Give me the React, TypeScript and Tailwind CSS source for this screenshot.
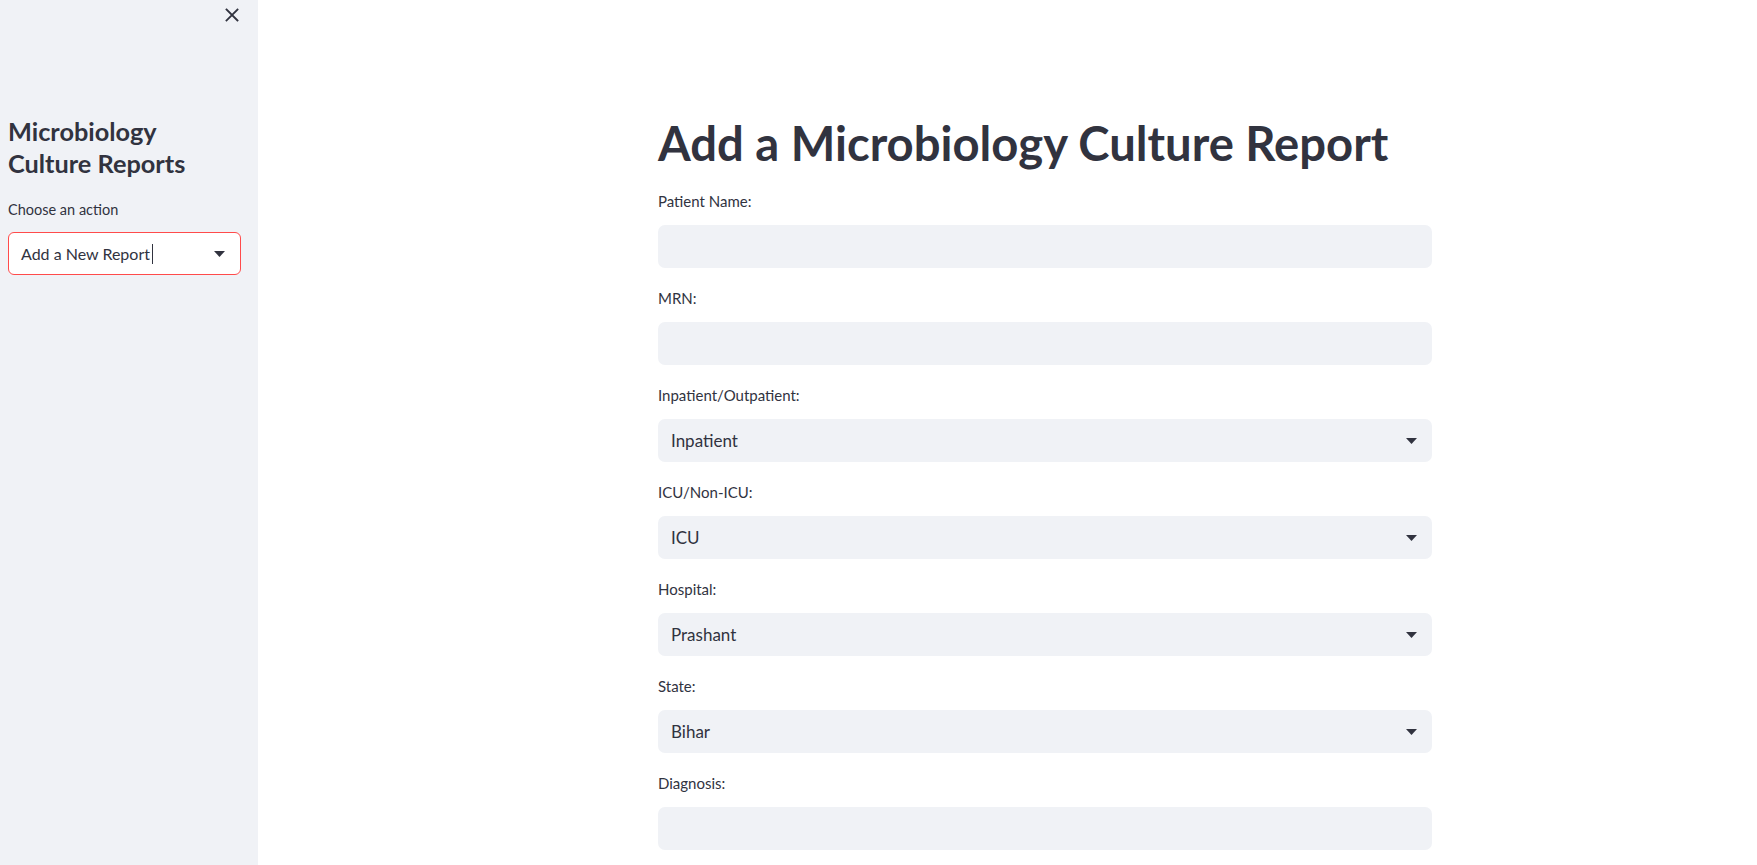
import React from "react";

const FONT = { fontFamily: "Lato, 'Noto Sans', sans-serif" };

function Caret() {
  return (
    <svg width="11" height="6" viewBox="0 0 11 6" className="shrink-0">
      <polygon points="0,0 11,0 5.5,6" fill="#31333F" />
    </svg>
  );
}

function Field({ label, value, select }: { label: string; value?: string; select?: boolean }) {
  return (
    <div className="flex flex-col">
      <div className="h-[22px] text-[15px] leading-[22px] text-[#31333F]">{label}</div>
      <div className="mt-[13px] flex h-[43px] items-center justify-between rounded-[7px] bg-[#f0f2f6] pl-[13px] pr-[15px]">
        <span className="text-[17px] text-[#31333F]">{value ?? ""}</span>
        {select ? <Caret /> : null}
      </div>
    </div>
  );
}

export default function App() {
  return (
    <div className="flex h-[865px] w-full overflow-hidden bg-white" style={FONT}>
      <aside className="flex w-[258px] shrink-0 flex-col bg-[#f0f2f6] px-[8px]">
        <div className="flex h-[22px] items-end justify-end pr-[11px]">
          <svg width="14" height="14" viewBox="0 0 14 14">
            <path d="M1.5 1.5 L12.5 12.5 M12.5 1.5 L1.5 12.5" stroke="#31333F" strokeWidth="1.8" strokeLinecap="square" />
          </svg>
        </div>
        <h2 className="mt-[93px] text-[25.3px] font-bold leading-[32px] text-[#31333F]">
          Microbiology
          <br />
          Culture Reports
        </h2>
        <div className="mt-[20px] h-[22px] text-[14.5px] leading-[22px] text-[#31333F]">Choose an action</div>
        <div className="mt-[11px] flex h-[43px] w-[233px] items-center justify-between rounded-[6px] border border-[#ff4b4b] bg-white pl-[12px] pr-[15px]">
          <span className="flex items-center text-[16px] text-[#31333F]">
            Add a New Report
            <span className="ml-[2px] inline-block h-[20px] w-[1px] bg-[#31333F]" />
          </span>
          <Caret />
        </div>
      </aside>
      <main className="flex-1 pl-[400px] pt-[113px]">
        <div className="flex w-[774px] flex-col">
          <h1 className="h-[60px] text-[47.2px] font-bold leading-[60px] text-[#31333F]">
            Add a Microbiology Culture Report
          </h1>
          <div className="mt-[17px] flex flex-col gap-[19px]">
            <Field label="Patient Name:" />
            <Field label="MRN:" />
            <Field label="Inpatient/Outpatient:" value="Inpatient" select />
            <Field label="ICU/Non-ICU:" value="ICU" select />
            <Field label="Hospital:" value="Prashant" select />
            <Field label="State:" value="Bihar" select />
            <Field label="Diagnosis:" />
          </div>
        </div>
      </main>
    </div>
  );
}
